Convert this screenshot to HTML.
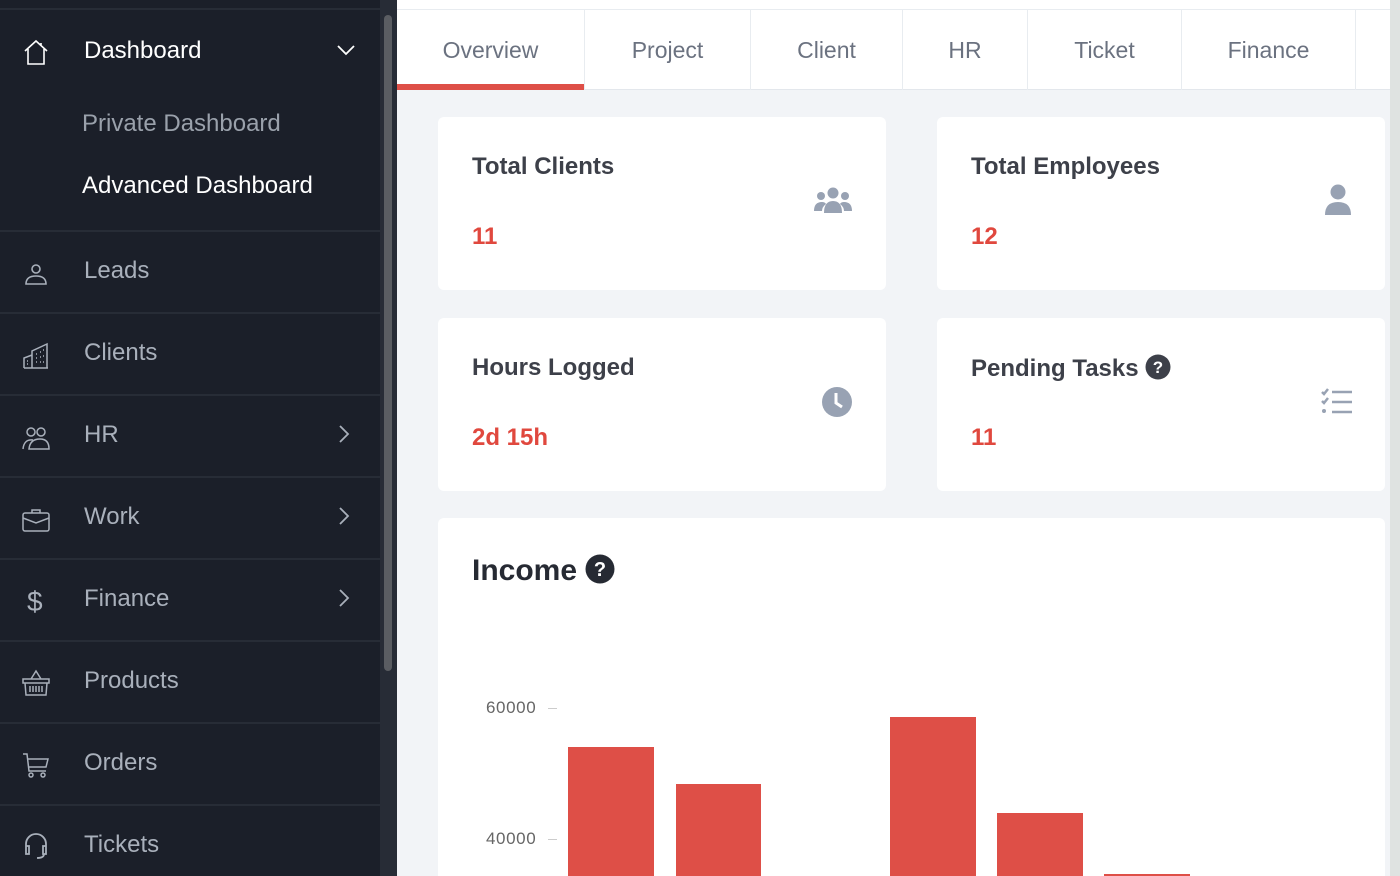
<!DOCTYPE html>
<html style="overflow:hidden;width:1400px;height:876px"><head><style>
*{box-sizing:border-box;margin:0;padding:0}
body{width:1400px;height:876px;overflow:hidden;background:#f2f4f7;font-family:"Liberation Sans",sans-serif;position:relative}
.sb{position:absolute;left:0;top:0;width:380px;height:876px;background:#1b1f29}
.sbt{position:absolute;left:380px;top:0;width:17px;height:876px;background:#272c36}
.thumb{position:absolute;left:384px;top:15px;width:8px;height:656px;border-radius:4px;background:#5a5d62}
.sep{position:absolute;left:0;width:380px;height:2px;background:#272c36}
.it{position:absolute;left:84px;font-size:24px;color:#a9b0bb}
.ic{position:absolute;left:22px;width:28px;height:28px}
.chev{position:absolute;left:336px}
.tabs{position:absolute;left:397px;top:9px;width:993px;height:81px;background:#fff;border-top:1px solid #e8ecf0;border-bottom:1px solid #e3e7ec}
.tab{position:absolute;top:0;height:80px;line-height:80px;text-align:center;font-size:23px;color:#6b7280;border-right:1px solid #e8ecf0}
.card{position:absolute;background:#fff;border-radius:6px}
.ct{position:absolute;left:34px;top:36px;font-size:24px;font-weight:bold;color:#3d4049}
.cv{position:absolute;left:34px;top:106px;font-size:24px;font-weight:bold;color:#e0483e}
.bar{position:absolute;background:#de4f47;bottom:0}
.lbl{position:absolute;left:486px;font-size:17px;letter-spacing:0.6px;color:#666}
.tick{position:absolute;left:548px;width:9px;height:1px;background:#ccc}
</style></head><body>
<div class="sb">
 <div class="sep" style="top:8px"></div>
 <svg class="ic" style="top:38px" viewBox="0 0 28 28" fill="none" stroke="#fff" stroke-width="1.6"><path d="M3 13 L14 3 L25 13 M6 11 V26 H22 V11 M19 5 V8"/></svg>
 <div class="it" style="top:37px;color:#fff">Dashboard</div>
 <svg class="chev" style="top:42px" width="20" height="16" viewBox="0 0 20 16" fill="none" stroke="#fff" stroke-width="1.8"><path d="M2 4 L10 12 L18 4"/></svg>
 <div class="it" style="top:110px;left:82px;color:#9aa1ab">Private Dashboard</div>
 <div class="it" style="top:172px;left:82px;color:#fff">Advanced Dashboard</div>
 <div class="sep" style="top:230px"></div>
 <svg class="ic" style="top:260px" viewBox="0 0 28 28" fill="none" stroke="#a9b0bb" stroke-width="1.6"><circle cx="14" cy="9" r="4"/><path d="M4 24 Q4 16 14 16 Q24 16 24 24 Z"/></svg>
 <div class="it" style="top:257px">Leads</div>
 <div class="sep" style="top:312px"></div>
 <svg class="ic" style="top:342px" viewBox="0 0 28 28" fill="none" stroke="#a9b0bb" stroke-width="1.5"><path d="M2 26 V16 L10 13 V26 M10 26 V9 L25 2 V26 Z M2 26 H26 M14 12h1M18 10h1M21 8h1M14 16h1M18 15h1M21 14h1M14 20h1M18 20h1M21 20h1M5 19h1M5 22h1"/></svg>
 <div class="it" style="top:339px">Clients</div>
 <div class="sep" style="top:394px"></div>
 <svg class="ic" style="top:424px" viewBox="0 0 28 28" fill="none" stroke="#a9b0bb" stroke-width="1.5"><circle cx="9" cy="8" r="4"/><circle cx="19" cy="8" r="4"/><path d="M1 25 Q2 15 11 16 M7 25 Q8 15 18 15 Q27 15 27 25 Z"/></svg>
 <div class="it" style="top:421px">HR</div>
 <svg class="chev" style="top:424px" width="16" height="20" viewBox="0 0 16 20" fill="none" stroke="#a9b0bb" stroke-width="1.8"><path d="M4 2 L12 10 L4 18"/></svg>
 <div class="sep" style="top:476px"></div>
 <svg class="ic" style="top:506px" viewBox="0 0 28 28" fill="none" stroke="#a9b0bb" stroke-width="1.5"><rect x="1" y="7" width="26" height="18" rx="2"/><path d="M10 7 V4 H18 V7 M1 12 L14 17 L27 12"/></svg>
 <div class="it" style="top:503px">Work</div>
 <svg class="chev" style="top:506px" width="16" height="20" viewBox="0 0 16 20" fill="none" stroke="#a9b0bb" stroke-width="1.8"><path d="M4 2 L12 10 L4 18"/></svg>
 <div class="sep" style="top:558px"></div>
 <div class="it" style="top:586px;left:27px;font-size:28px">$</div>
 <div class="it" style="top:585px">Finance</div>
 <svg class="chev" style="top:588px" width="16" height="20" viewBox="0 0 16 20" fill="none" stroke="#a9b0bb" stroke-width="1.8"><path d="M4 2 L12 10 L4 18"/></svg>
 <div class="sep" style="top:640px"></div>
 <svg class="ic" style="top:669px" viewBox="0 0 28 28" fill="none" stroke="#a9b0bb" stroke-width="1.5"><path d="M9 10 L14 2 L19 10 M1 10 H27 V14 H1 Z M3 14 L4 26 H24 L25 14 M8 17v6M11 17v6M14 17v6M17 17v6M20 17v6"/></svg>
 <div class="it" style="top:667px">Products</div>
 <div class="sep" style="top:722px"></div>
 <svg class="ic" style="top:751px" viewBox="0 0 28 28" fill="none" stroke="#a9b0bb" stroke-width="1.5"><path d="M1 3 H5 L7 20 H24 M6 8 H26 L24 16 H7"/><circle cx="9" cy="24" r="2"/><circle cx="21" cy="24" r="2"/></svg>
 <div class="it" style="top:749px">Orders</div>
 <div class="sep" style="top:804px"></div>
 <svg class="ic" style="top:832px" viewBox="0 0 28 28" fill="none" stroke="#a9b0bb" stroke-width="1.8"><path d="M4 18 V12 A10 10 0 0 1 24 12 V18 M4 14 H7 V22 H4 Z M21 14 H24 V22 H21 Z M22 22 Q22 26 15 26"/></svg>
 <div class="it" style="top:831px">Tickets</div>
</div>
<div class="sbt"></div><div class="thumb"></div>
<div style="position:absolute;left:397px;top:0;width:993px;height:9px;background:#fff"></div>
<div style="position:absolute;left:1390px;top:0;width:10px;height:876px;background:#dfe3e1"></div>
<div class="tabs">
 <div class="tab" style="left:0;width:188px;color:#6b7280">Overview</div>
 <div style="position:absolute;left:0;top:74px;width:187px;height:6px;background:#de4f47"></div>
 <div class="tab" style="left:188px;width:166px">Project</div>
 <div class="tab" style="left:354px;width:152px">Client</div>
 <div class="tab" style="left:506px;width:125px">HR</div>
 <div class="tab" style="left:631px;width:154px">Ticket</div>
 <div class="tab" style="left:785px;width:174px">Finance</div>
</div>
<div class="card" style="left:438px;top:117px;width:448px;height:173px"><div class="ct">Total Clients</div><div class="cv">11</div>
 <svg style="position:absolute;left:375px;top:70px" width="40" height="28" viewBox="0 0 40 28" fill="#98a2b3"><circle cx="20" cy="6" r="5.5"/><circle cx="8" cy="9" r="4"/><circle cx="32" cy="9" r="4"/><path d="M11 26 Q11 14 20 14 Q29 14 29 26 Z M1 24 Q1 15 9 15 Q12 15 13 17 Q9 20 9 24 Z M39 24 Q39 15 31 15 Q28 15 27 17 Q31 20 31 24 Z"/></svg></div>
<div class="card" style="left:937px;top:117px;width:448px;height:173px"><div class="ct">Total Employees</div><div class="cv">12</div>
 <svg style="position:absolute;left:387px;top:67px" width="28" height="32" viewBox="0 0 28 32" fill="#98a2b3"><circle cx="14" cy="8" r="7.5"/><path d="M1 31 Q1 18 14 18 Q27 18 27 31 Z"/></svg></div>
<div class="card" style="left:438px;top:318px;width:448px;height:173px"><div class="ct">Hours Logged</div><div class="cv">2d 15h</div>
 <svg style="position:absolute;left:383px;top:68px" width="32" height="32" viewBox="0 0 32 32"><circle cx="16" cy="16" r="15" fill="#98a2b3"/><path d="M15 7 V17 L21 21" stroke="#fff" stroke-width="3" fill="none"/></svg></div>
<div class="card" style="left:937px;top:318px;width:448px;height:173px"><div class="ct">Pending Tasks <svg width="26" height="26" viewBox="0 0 26 26" style="vertical-align:-4px"><circle cx="13" cy="13" r="12.5" fill="#3d4049"/><text x="13" y="19" font-size="17" font-weight="bold" fill="#fff" text-anchor="middle" font-family="Liberation Sans">?</text></svg></div><div class="cv">11</div>
 <svg style="position:absolute;left:383px;top:70px" width="34" height="28" viewBox="0 0 34 28" fill="none" stroke="#98a2b3" stroke-width="2.5"><path d="M2 4 L4 6 L8 1 M2 13 L4 15 L8 10 M12 4 H32 M12 14 H32 M12 24 H32"/><circle cx="4" cy="23" r="2" fill="#98a2b3" stroke="none"/></svg></div>
<div class="card" style="left:438px;top:518px;width:947px;height:358px;border-radius:6px 6px 0 0">
 <div style="position:absolute;left:34px;top:36px;font-size:30px;font-weight:bold;color:#262a33">Income <svg width="30" height="30" viewBox="0 0 30 30" style="vertical-align:-4px"><circle cx="15" cy="15" r="14.5" fill="#262a33"/><text x="15" y="22" font-size="20" font-weight="bold" fill="#fff" text-anchor="middle" font-family="Liberation Sans">?</text></svg></div>
</div>
<div class="lbl" style="top:698px">60000</div><div class="tick" style="top:708px"></div>
<div class="lbl" style="top:829px">40000</div><div class="tick" style="top:839px"></div>
<div class="bar" style="left:568px;width:86px;top:747px"></div>
<div class="bar" style="left:676px;width:85px;top:784px"></div>
<div class="bar" style="left:890px;width:86px;top:717px"></div>
<div class="bar" style="left:997px;width:86px;top:813px"></div>
<div class="bar" style="left:1104px;width:86px;top:874px"></div>
</body></html>
